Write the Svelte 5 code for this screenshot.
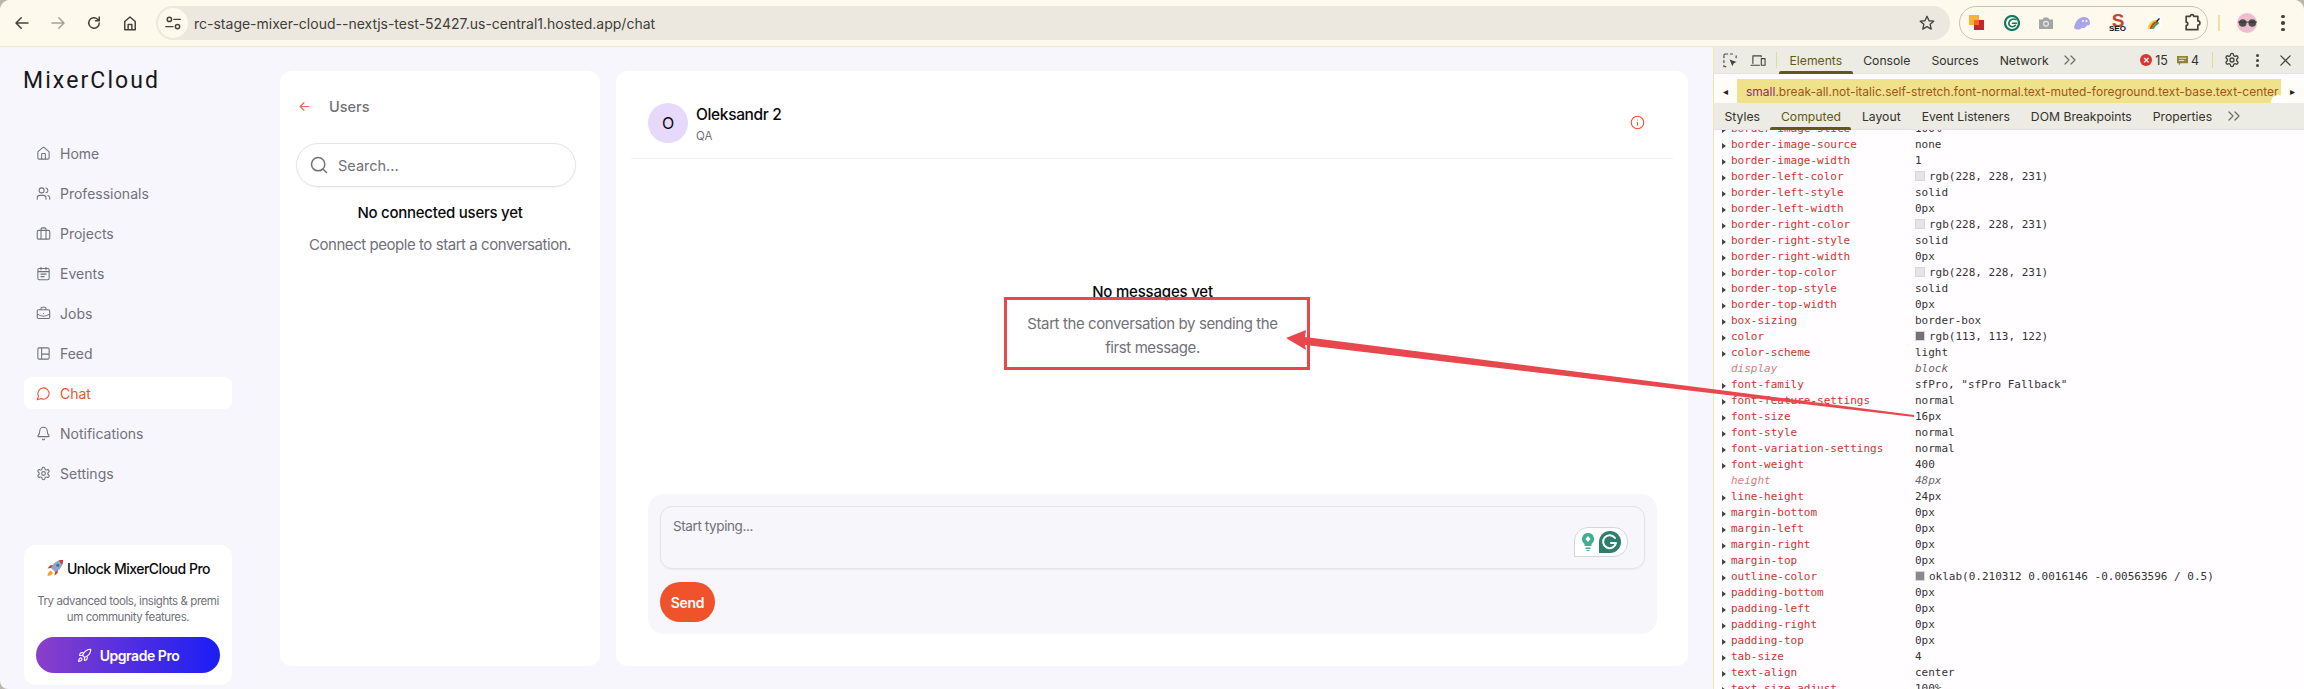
<script>
	const nav = [
		{ label: 'Home', icon: 'home' },
		{ label: 'Professionals', icon: 'users' },
		{ label: 'Projects', icon: 'luggage' },
		{ label: 'Events', icon: 'calendar' },
		{ label: 'Jobs', icon: 'briefcase' },
		{ label: 'Feed', icon: 'feed' },
		{ label: 'Chat', icon: 'chat', active: true },
		{ label: 'Notifications', icon: 'bell' },
		{ label: 'Settings', icon: 'gear' }
	];

	const icons = {
		home: 'M15 21v-8a1 1 0 0 0-1-1h-4a1 1 0 0 0-1 1v8M3 10a2 2 0 0 1 .709-1.528l7-5.999a2 2 0 0 1 2.582 0l7 5.999A2 2 0 0 1 21 10v9a2 2 0 0 1-2 2H5a2 2 0 0 1-2-2z',
		users: 'M16 21v-2a4 4 0 0 0-4-4H6a4 4 0 0 0-4 4v2M13 7a4 4 0 1 1-8 0 4 4 0 0 1 8 0M22 21v-2a4 4 0 0 0-3-3.87M16 3.13a4 4 0 0 1 0 7.75',
		luggage: 'M4 7h16a2 2 0 0 1 2 2v10a2 2 0 0 1-2 2H4a2 2 0 0 1-2-2V9a2 2 0 0 1 2-2zM8 21V5a2 2 0 0 1 2-2h4a2 2 0 0 1 2 2v16',
		calendar: 'M5 4h14a2 2 0 0 1 2 2v14a2 2 0 0 1-2 2H5a2 2 0 0 1-2-2V6a2 2 0 0 1 2-2zM8 2v4M16 2v4M3 9h18M8 13h8M8 17h5',
		briefcase: 'M12 12h.01M16 6V4a2 2 0 0 0-2-2h-4a2 2 0 0 0-2 2v2M22 13a18.15 18.15 0 0 1-20 0M4 6h16a2 2 0 0 1 2 2v10a2 2 0 0 1-2 2H4a2 2 0 0 1-2-2V8a2 2 0 0 1 2-2z',
		feed: 'M5 3h14a2 2 0 0 1 2 2v14a2 2 0 0 1-2 2H5a2 2 0 0 1-2-2V5a2 2 0 0 1 2-2zM9 3v18M9 13h12',
		chat: 'M7.9 20A9 9 0 1 0 4 16.1L2 22Z',
		bell: 'M10.268 21a2 2 0 0 0 3.464 0M3.262 15.326A1 1 0 0 0 4 17h16a1 1 0 0 0 .74-1.673C19.41 13.956 18 12.499 18 8A6 6 0 0 0 6 8c0 4.499-1.411 5.956-2.738 7.326',
		gear: 'M12.22 2h-.44a2 2 0 0 0-2 2v.18a2 2 0 0 1-1 1.73l-.43.25a2 2 0 0 1-2 0l-.15-.08a2 2 0 0 0-2.73.73l-.22.38a2 2 0 0 0 .73 2.73l.15.1a2 2 0 0 1 1 1.72v.51a2 2 0 0 1-1 1.74l-.15.09a2 2 0 0 0-.73 2.73l.22.38a2 2 0 0 0 2.73.73l.15-.08a2 2 0 0 1 2 0l.43.25a2 2 0 0 1 1 1.73V20a2 2 0 0 0 2 2h.44a2 2 0 0 0 2-2v-.18a2 2 0 0 1 1-1.73l.43-.25a2 2 0 0 1 2 0l.15.08a2 2 0 0 0 2.73-.73l.22-.39a2 2 0 0 0-.73-2.73l-.15-.08a2 2 0 0 1-1-1.74v-.5a2 2 0 0 1 1-1.74l.15-.09a2 2 0 0 0 .73-2.73l-.22-.38a2 2 0 0 0-2.73-.73l-.15.08a2 2 0 0 1-2 0l-.43-.25a2 2 0 0 1-1-1.73V4a2 2 0 0 0-2-2zM15 12a3 3 0 1 1-6 0 3 3 0 0 1 6 0'
	};

	const light = '#e4e4e7';
	const rows = [
		{ k: 'border-image-slice', v: '100%' },
		{ k: 'border-image-source', v: 'none' },
		{ k: 'border-image-width', v: '1' },
		{ k: 'border-left-color', v: 'rgb(228, 228, 231)', s: light },
		{ k: 'border-left-style', v: 'solid' },
		{ k: 'border-left-width', v: '0px' },
		{ k: 'border-right-color', v: 'rgb(228, 228, 231)', s: light },
		{ k: 'border-right-style', v: 'solid' },
		{ k: 'border-right-width', v: '0px' },
		{ k: 'border-top-color', v: 'rgb(228, 228, 231)', s: light },
		{ k: 'border-top-style', v: 'solid' },
		{ k: 'border-top-width', v: '0px' },
		{ k: 'box-sizing', v: 'border-box' },
		{ k: 'color', v: 'rgb(113, 113, 122)', s: '#71717a' },
		{ k: 'color-scheme', v: 'light' },
		{ k: 'display', v: 'block', dim: true },
		{ k: 'font-family', v: 'sfPro, "sfPro Fallback"' },
		{ k: 'font-feature-settings', v: 'normal' },
		{ k: 'font-size', v: '16px' },
		{ k: 'font-style', v: 'normal' },
		{ k: 'font-variation-settings', v: 'normal' },
		{ k: 'font-weight', v: '400' },
		{ k: 'height', v: '48px', dim: true },
		{ k: 'line-height', v: '24px' },
		{ k: 'margin-bottom', v: '0px' },
		{ k: 'margin-left', v: '0px' },
		{ k: 'margin-right', v: '0px' },
		{ k: 'margin-top', v: '0px' },
		{ k: 'outline-color', v: 'oklab(0.210312 0.0016146 -0.00563596 / 0.5)', s: '#8a8a8c' },
		{ k: 'padding-bottom', v: '0px' },
		{ k: 'padding-left', v: '0px' },
		{ k: 'padding-right', v: '0px' },
		{ k: 'padding-top', v: '0px' },
		{ k: 'tab-size', v: '4' },
		{ k: 'text-align', v: 'center' },
		{ k: 'text-size-adjust', v: '100%' }
	];
</script>

<div class="window">
	<header class="chrome">
		<div class="controls">
			<svg viewBox="0 0 24 24" class="cico"><path d="M20 12H5M11 5l-7 7 7 7" /></svg>
			<svg viewBox="0 0 24 24" class="cico faded"><path d="M4 12h15M13 5l7 7-7 7" /></svg>
			<svg viewBox="0 0 24 24" class="cico"><path d="M19 12a7 7 0 1 1-2.2-5.1L19 9M19 4v5h-5" /></svg>
			<svg viewBox="0 0 24 24" class="cico"><path d="M5 21V10l7-6 7 6v11h-4.500v-7h-5v7zM9.500 21h5" /></svg>
		</div>
		<div class="url">
			<span class="site">
				<svg viewBox="0 0 20 20" width="18" height="18"><circle cx="6" cy="6" r="2.400" /><path d="M11 6h7M2 14h8" /><circle cx="15" cy="14" r="2.400" /></svg>
			</span>
			<span class="addr">rc-stage-mixer-cloud--nextjs-test-52427.us-central1.hosted.app/chat</span>
			<svg viewBox="0 0 24 24" class="star"><path d="M12 3l2.700 6 6.300.6-4.800 4.200 1.400 6.400L12 16.900 6.400 20.200l1.400-6.400L3 9.600l6.300-.6z" /></svg>
		</div>
		<div class="exts">
			<svg viewBox="0 0 16 16" width="16" height="16"><rect x="0" y="0" width="10" height="10" fill="#f9b233" /><rect x="5" y="5" width="10" height="10" fill="#c8222d" /><rect x="5" y="5" width="5" height="5" fill="#f0662a" /></svg>
			<svg viewBox="0 0 16 16" width="16" height="16"><circle cx="8" cy="8" r="7" fill="none" stroke="#14795f" stroke-width="2.200" /><path d="M8.500 8.300h4M12 4.600A5 5 0 0 0 4.800 8a3.700 3.700 0 0 0 6.600 2.300" fill="none" stroke="#14795f" stroke-width="1.600" /></svg>
			<svg viewBox="0 0 16 16" width="16" height="16"><path d="M1 4.500h3.500L6 2.500h4l1.500 2H15v9.500H1z" fill="#a4a4a4" /><circle cx="8" cy="8.800" r="3" fill="#ece9e2" /><circle cx="8" cy="8.800" r="1.800" fill="#a4a4a4" /></svg>
			<svg viewBox="0 0 18 16" width="18" height="16"><path d="M1 13c1-6 4-11 10-11 4 0 6 3 6 6s-2 2-3 2.500-1.500 3-4 2.500-2 1.500-4 1.500-3 .5-5-1.500z" fill="#a9a4ee" /><circle cx="10" cy="6" r="1" fill="#fff" /><circle cx="13.500" cy="6" r="1" fill="#fff" /></svg>
			<span class="seo"><b>S</b><i>SEO</i></span>
			<svg viewBox="0 0 16 16" width="16" height="16"><circle cx="8" cy="8" r="8" fill="#fff" /><path d="M3 13c1-4 3-6 6-7" stroke="#f4d21f" stroke-width="2.500" fill="none" /><path d="M5 13c1-3 3-5 6-6" stroke="#e5322d" stroke-width="2.200" fill="none" /><path d="M7 13c1-2 3-4 5-5" stroke="#1fb25a" stroke-width="2" fill="none" /><path d="M10 6l3-3 1 1-3 3z" fill="#222" /></svg>
			<svg viewBox="0 0 24 24" class="cico puzzle"><path d="M5 4h5a2 2 0 0 1 4 0h5v5.500a2.500 2.500 0 0 1 0 5V20H5v-5a2 2 0 0 0 0-4z" /></svg>
		</div>
		<span class="sep"></span>
		<span class="profile">
			<svg viewBox="0 0 20 10" width="19" height="10"><circle cx="5" cy="5" r="4" fill="#4d4d4d" /><circle cx="15" cy="5" r="4" fill="#4d4d4d" /><path d="M0 4h20" stroke="#333" stroke-width="1" /></svg>
		</span>
		<span class="kebab"><i></i><i></i><i></i></span>
	</header>

	<div class="body">
		<div class="app">
			<aside class="sidebar">
				<div class="logo">MixerCloud</div>
				<nav>
					{#each nav as item}
						<div class="nav-item" class:active={item.active}>
							<svg viewBox="0 0 24 24" class="ico"><path d={icons[item.icon]} /></svg>
							<span>{item.label}</span>
						</div>
					{/each}
				</nav>
				<div class="pro">
					<div class="pro-title">
						<svg viewBox="0 0 18 18" width="18" height="18">
							<path d="M5 9C7 4 11 1 17 1c0 6-3 10-8 12z" fill="#8fa7c9" />
							<path d="M12.500 1.500C14.500 1 16 1 17 1c0 1.500-.2 3-.7 4.500z" fill="#d8352c" />
							<circle cx="11.800" cy="6.200" r="1.500" fill="#3b6ea5" />
							<path d="M5 9L1.500 9.500 4 6.500l3-.5zM9 13l-.5 3.500 3-2.500.5-3z" fill="#d8352c" />
							<path d="M4.500 11.500c-2 1-3 3-3 5.500 2.500 0 4.500-1 5.500-3z" fill="#f6a623" />
						</svg>
						<span>Unlock MixerCloud Pro</span>
					</div>
					<p>Try advanced tools, insights &amp; premi<br />um community features.</p>
					<button class="upgrade">
						<svg viewBox="0 0 24 24" class="rocket">
							<path d="M4.500 16.500c-1.500 1.260-2 5-2 5s3.740-.5 5-2c.71-.84.7-2.130-.09-2.910a2.180 2.180 0 0 0-2.910-.09zM12 15l-3-3a22 22 0 0 1 2-3.950A12.880 12.880 0 0 1 22 2c0 2.720-.78 7.500-6 11a22.350 22.350 0 0 1-4 2zM9 12H4s.55-3.030 2-4c1.620-1.080 5 0 5 0M12 15v5s3.030-.55 4-2c1.080-1.620 0-5 0-5" />
						</svg>
						<span>Upgrade Pro</span>
					</button>
				</div>
			</aside>

			<section class="users">
				<div class="users-head">
					<svg viewBox="0 0 24 24" class="back"><path d="M20 12H5M11 5l-7 7 7 7" /></svg>
					<span>Users</span>
				</div>
				<div class="search">
					<svg viewBox="0 0 24 24" class="search-ico"><path d="M19 11a8 8 0 1 1-16 0 8 8 0 0 1 16 0M21 21l-4.300-4.300" /></svg>
					<span>Search...</span>
				</div>
				<div class="none-title">No connected users yet</div>
				<div class="none-text">Connect people to start a conversation.</div>
			</section>

			<section class="chat">
				<div class="chat-head">
					<div class="avatar">O</div>
					<div class="who">
						<div class="name">Oleksandr 2</div>
						<div class="role">QA</div>
					</div>
					<svg viewBox="0 0 24 24" class="info"><path d="M22 12a10 10 0 1 1-20 0 10 10 0 0 1 20 0M12 16v-4M12 8h.01" /></svg>
				</div>
				<div class="empty">
					<div class="empty-title">No messages yet</div>
					<div class="empty-text">Start the conversation by sending the<br />first message.</div>
				</div>
				<div class="composer">
					<div class="input">
						<span>Start typing...</span>
						<div class="gram">
							<svg viewBox="0 0 14 20" width="14" height="20"><path d="M7 1a6 6 0 0 1 3.500 10.900V14h-7v-2.100A6 6 0 0 1 7 1z" fill="#3fae93" /><path d="M4.500 15.500h5v1.500h-5zM5.500 18h3v1h-3z" fill="#3fae93" /><path d="M7 4l2.500 3L7 10 4.500 7z" fill="#fff" /></svg>
							<svg viewBox="0 0 22 22" width="22" height="22"><circle cx="11" cy="11" r="11" fill="#2f7d6d" /><rect x="0" y="11" width="11" height="11" fill="#2f7d6d" /><path d="M16 7a6.500 6.500 0 1 0 1 5h-5" fill="none" stroke="#fff" stroke-width="2" /></svg>
						</div>
					</div>
					<button class="send">Send</button>
				</div>
			</section>
		</div>

		<div class="devtools">
			<div class="dt-bar">
				<svg viewBox="0 0 16 16" class="dt-ico first"><path d="M1 5V2.500A1.500 1.500 0 0 1 2.500 1H5M8 1h2.500M14 5V2.500M1 8v2M1 13v1.500h2" stroke-dasharray="2 1" /><path d="M7 7l7.500 2.500-3 1.500-1.500 3z" fill="#45443c" stroke="none" /></svg>
				<svg viewBox="0 0 18 16" class="dt-ico dev"><path d="M3 11V3h9v1M1 13h9M12 6h4v7h-4z" /></svg>
				<span class="dt-div"></span>
				<span class="tab on">Elements</span>
				<span class="tab">Console</span>
				<span class="tab">Sources</span>
				<span class="tab">Network</span>
				<svg viewBox="0 0 12 10" class="more"><path d="M1 1l4 4-4 4M7 1l4 4-4 4" /></svg>
				<span class="grow"></span>
				<span class="err">&#x2715;</span>
				<span class="count">15</span>
				<svg viewBox="0 0 12 12" class="msg"><path d="M0 1h12v8H4l-2 2.500V9H0z" fill="#8d8433" /><path d="M2.500 3.500h7M2.500 6h5" stroke="#ecebe4" /></svg>
				<span class="count">4</span>
				<span class="dt-div two"></span>
				<svg viewBox="0 0 24 24" class="dt-gear"><path d={icons.gear} /></svg>
				<span class="kebab small"><i></i><i></i><i></i></span>
				<svg viewBox="0 0 14 14" class="dt-x"><path d="M2 2l10 10M12 2L2 12" /></svg>
			</div>
			<div class="crumb-gap"></div>
			<div class="crumbs">
				<span class="crumb-btn">&#9666;</span>
				<span class="crumb-text"><em>small</em>.break-all.not-italic.self-stretch.font-normal.text-muted-foreground.text-base.text-center</span>
				<span class="crumb-btn right">&#9656;</span>
				<span class="bump"></span>
			</div>
			<div class="dt-bar sub">
				<span class="tab">Styles</span>
				<span class="tab on">Computed</span>
				<span class="tab">Layout</span>
				<span class="tab">Event Listeners</span>
				<span class="tab">DOM Breakpoints</span>
				<span class="tab">Properties</span>
				<svg viewBox="0 0 12 10" class="more"><path d="M1 1l4 4-4 4M7 1l4 4-4 4" /></svg>
			</div>
			<div class="props">
				{#each rows as row}
					<div class="row" class:dim={row.dim}>
						<span class="tri"></span>
						<span class="key">{row.k}</span>
						<span class="val">
							{#if row.s}<i class="swatch" style="background: {row.s}"></i>{/if}{row.v}
						</span>
					</div>
				{/each}
			</div>
		</div>
	</div>

	<div class="box"></div>
	<svg class="arrow" viewBox="0 0 640 94" width="640" height="94">
		<path d="M2 12L22 4l-1 7L630 89v2L21 19l1 5z" fill="#e8484d" />
	</svg>
</div>

<style>
	:global(body) {
		margin: 0;
		background: #b9b7ae;
	}
	.window {
		position: relative;
		width: 2304px;
		height: 689px;
		overflow: hidden;
		border-radius: 10px 10px 0 8px;
		font-family: Inter, 'Noto Sans', sans-serif;
		display: flex;
		flex-direction: column;
		background: #f6f6fc;
	}
	svg {
		flex: none;
		display: block;
		stroke-linecap: round;
		stroke-linejoin: round;
	}

	/* browser bar */
	.chrome {
		height: 46px;
		flex: none;
		display: flex;
		align-items: center;
		background: #fdf9ec;
		border-bottom: 1px solid #efe9d2;
		padding-left: 13px;
	}
	.controls {
		display: flex;
		gap: 18px;
		width: 143px;
	}
	.cico {
		width: 18px;
		height: 18px;
		fill: none;
		stroke: #45443c;
		stroke-width: 2;
	}
	.cico.faded {
		stroke: #a5a396;
	}
	.url {
		width: 1794px;
		height: 34px;
		border-radius: 17px;
		background: #ece8e0;
		display: flex;
		align-items: center;
		padding: 0 14px 0 2px;
		box-sizing: border-box;
	}
	.site {
		width: 30px;
		height: 30px;
		border-radius: 50%;
		background: #fdf9ec;
		display: flex;
		align-items: center;
		justify-content: center;
	}
	.site svg {
		fill: none;
		stroke: #45443c;
		stroke-width: 1.600;
	}
	.addr {
		margin-left: 6px;
		font-size: 14px;
		color: #3f3e37;
		font-variant-ligatures: none;
		font-feature-settings: 'calt' 0;
	}
	.star {
		width: 18px;
		height: 18px;
		margin-left: auto;
		fill: none;
		stroke: #45443c;
		stroke-width: 1.800;
	}
	.exts {
		margin-left: 9px;
		width: 249px;
		height: 34px;
		box-sizing: border-box;
		border: 1px solid #c8c4b4;
		border-radius: 17px;
		display: flex;
		align-items: center;
		justify-content: space-between;
		padding: 0 5px 0 9px;
	}
	.exts > * {
		flex: none;
	}
	.puzzle {
		margin-left: 2px;
		width: 20px;
		height: 20px;
		stroke: #45443c;
	}
	.seo {
		position: relative;
		width: 18px;
		height: 20px;
		text-align: center;
		font-family: 'Liberation Sans', sans-serif;
		line-height: 1;
	}
	.seo b {
		color: #c9432f;
		font-size: 19px;
		line-height: 16px;
		display: block;
	}
	.seo i {
		position: absolute;
		left: 0;
		bottom: 0;
		font-style: normal;
		font-weight: 700;
		font-size: 8px;
		color: #111;
	}
	.sep {
		width: 2px;
		height: 16px;
		background: #efe0a0;
		margin-left: 10px;
	}
	.profile {
		width: 20px;
		height: 20px;
		border-radius: 50%;
		background: #efbdd0;
		margin-left: 17px;
		display: flex;
		align-items: center;
		justify-content: center;
	}
	.kebab {
		display: flex;
		flex-direction: column;
		gap: 3px;
		margin-left: 24px;
	}
	.kebab i {
		width: 3.500px;
		height: 3.500px;
		border-radius: 50%;
		background: #45443c;
	}

	.body {
		flex: 1;
		min-height: 0;
		display: flex;
	}
	.app {
		width: 1713px;
		flex: none;
		display: flex;
		box-sizing: border-box;
		padding-right: 25px;
	}

	/* sidebar */
	.sidebar {
		width: 280px;
		flex: none;
		box-sizing: border-box;
		padding: 0 48px 4px 24px;
		display: flex;
		flex-direction: column;
	}
	.logo {
		margin: 23px 0 0 -1px;
		font-family: Roboto, sans-serif;
		font-size: 23px;
		line-height: 22px;
		letter-spacing: 2.100px;
		color: #18181b;
		white-space: nowrap;
	}
	nav {
		margin-top: 45px;
		display: flex;
		flex-direction: column;
		gap: 8px;
	}
	.nav-item {
		height: 32px;
		border-radius: 8px;
		display: flex;
		align-items: center;
		padding-left: 12px;
		gap: 9px;
		font-size: 14px;
		color: #71717a;
	}
	.nav-item.active {
		background: #fff;
		color: #f0532b;
	}
	.ico {
		width: 15px;
		height: 15px;
		fill: none;
		stroke: currentColor;
		stroke-width: 1.700;
	}
	.pro {
		margin-top: auto;
		height: 140px;
		box-sizing: border-box;
		background: #fff;
		border-radius: 12px;
		padding: 13px 12px 12px;
		text-align: center;
	}
	.pro-title {
		display: flex;
		justify-content: center;
		align-items: center;
		gap: 3px;
		height: 20px;
		font-size: 14px;
		font-weight: 500;
		letter-spacing: -0.5px;
		color: #09090b;
	}
	.pro p {
		margin: 15px -6px 12px;
		font-size: 11.500px;
		line-height: 16px;
		letter-spacing: -0.43px;
		white-space: nowrap;
		color: #71717a;
	}
	.upgrade {
		width: 100%;
		height: 36px;
		border: 0;
		border-radius: 18px;
		background: linear-gradient(90deg, #8b3fc9, #1a1ef5);
		color: #fff;
		font: 600 14px Inter, sans-serif;
		letter-spacing: -0.45px;
		display: flex;
		align-items: center;
		justify-content: center;
		gap: 8px;
	}
	.rocket {
		width: 15px;
		height: 15px;
		fill: none;
		stroke: #fff;
		stroke-width: 1.800;
	}

	/* users */
	.users {
		width: 320px;
		flex: none;
		margin: 24px 16px 23px 0;
		background: #fff;
		border-radius: 12px;
		box-sizing: border-box;
		padding: 23px 24px 0 16px;
		text-align: center;
	}
	.users-head {
		display: flex;
		align-items: center;
		height: 24px;
		gap: 18px;
		padding-left: 2px;
		color: #71717a;
		font-size: 14.500px;
		font-weight: 500;
	}
	.back {
		width: 13px;
		height: 13px;
		fill: none;
		stroke: #f0664a;
		stroke-width: 2.200;
	}
	.search {
		margin-top: 25px;
		height: 44px;
		box-sizing: border-box;
		border: 1px solid #e4e4e7;
		border-radius: 22px;
		box-shadow: 0 1px 2px rgba(0, 0, 0, 0.05);
		display: flex;
		align-items: center;
		gap: 9px;
		padding-left: 12px;
		font-size: 14.500px;
		color: #71717a;
	}
	.search-ico {
		width: 20px;
		height: 20px;
		fill: none;
		stroke: #71717a;
		stroke-width: 1.800;
	}
	.none-title {
		margin-top: 14px;
		padding-left: 8px;
		line-height: 24px;
		font-size: 15px;
		font-weight: 500;
		letter-spacing: -0.25px;
		color: #09090b;
		white-space: nowrap;
	}
	.none-text {
		margin-top: 8px;
		padding-left: 8px;
		line-height: 24px;
		font-size: 15px;
		letter-spacing: -0.45px;
		white-space: nowrap;
		color: #71717a;
	}

	/* chat */
	.chat {
		flex: 1;
		margin: 24px 0 23px;
		background: #fff;
		border-radius: 12px;
		box-sizing: border-box;
		padding: 0 15px;
		display: flex;
		flex-direction: column;
	}
	.chat-head {
		height: 88px;
		flex: none;
		box-sizing: border-box;
		border-bottom: 1px solid #f3f3f5;
		padding: 32px 28px 0 17px;
		display: flex;
		gap: 8px;
	}
	.avatar {
		width: 40px;
		height: 40px;
		flex: none;
		border-radius: 50%;
		background: #e6d9fb;
		color: #09090b;
		display: flex;
		align-items: center;
		justify-content: center;
		font-size: 16px;
	}
	.who {
		flex: 1;
		padding-top: 1px;
	}
	.name {
		font-size: 15.500px;
		font-weight: 500;
		line-height: 22px;
		color: #09090b;
		letter-spacing: -0.35px;
	}
	.role {
		margin-top: 2px;
		font-size: 11.500px;
		line-height: 16px;
		color: #71717a;
	}
	.info {
		width: 15px;
		height: 15px;
		margin-top: 12px;
		fill: none;
		stroke: #f0532b;
		stroke-width: 1.800;
	}
	.empty {
		flex: 1;
		text-align: center;
		padding: 121px 0 0 1px;
		line-height: 24px;
		font-size: 15px;
	}
	.empty-title {
		font-weight: 500;
		color: #09090b;
		letter-spacing: -0.2px;
	}
	.empty-text {
		margin-top: 8px;
		color: #71717a;
		letter-spacing: -0.4px;
	}
	.composer {
		height: 140px;
		flex: none;
		margin: 0 16px 32px 17px;
		background: #f6f6fb;
		border-radius: 16px;
		padding: 12px;
		box-sizing: border-box;
	}
	.input {
		position: relative;
		height: 63px;
		box-sizing: border-box;
		border: 1px solid #e4e4e7;
		border-radius: 12px;
		box-shadow: 0 1px 2px rgba(0, 0, 0, 0.05);
		padding: 9px 12px;
		font-size: 13.500px;
		letter-spacing: -0.4px;
		line-height: 20px;
		color: #71717a;
	}
	.gram {
		position: absolute;
		right: 16px;
		top: 20px;
		height: 30px;
		width: 54px;
		box-sizing: border-box;
		background: #fff;
		border: 1px solid #d5d5dc;
		border-radius: 14px 14px 14px 0;
		display: flex;
		align-items: center;
		justify-content: center;
		gap: 4px;
	}
	.send {
		margin-top: 13px;
		display: block;
		width: 55px;
		height: 40px;
		border: 0;
		border-radius: 20px;
		background: #f0532b;
		color: #fff;
		font: 600 14px Inter, sans-serif;
		padding: 0;
		letter-spacing: -0.3px;
	}

	/* devtools */
	.devtools {
		width: 591px;
		flex: none;
		box-sizing: border-box;
		border-left: 1px solid #f0e8a6;
		background: #fffdff;
		display: flex;
		flex-direction: column;
		min-height: 0;
	}
	.dt-bar {
		height: 26px;
		flex: none;
		display: flex;
		align-items: stretch;
		background: #ecebe4;
		border-bottom: 1px solid #efe8a8;
		font-size: 12.200px;
		color: #33322b;
	}
	.dt-ico {
		align-self: center;
		width: 15px;
		height: 15px;
		fill: none;
		stroke: #45443c;
		stroke-width: 1.200;
	}
	.dt-ico.first {
		margin-left: 9px;
	}
	.dt-ico.dev {
		width: 17px;
		margin-left: 12px;
	}
	.dt-div {
		width: 1px;
		height: 16px;
		align-self: center;
		background: #e3d9a0;
		margin: 0 2px 0 9px;
	}
	.dt-div.two {
		margin: 0 0 0 13px;
	}
	.tab {
		position: relative;
		display: flex;
		align-items: center;
		padding: 0 10.500px;
		white-space: nowrap;
	}
	.tab.on {
		color: #625a14;
	}
	.tab.on::after {
		content: '';
		position: absolute;
		left: 0;
		right: 0;
		bottom: -1px;
		height: 3px;
		border-radius: 2px 2px 0 0;
		background: #625a14;
	}
	.more {
		align-self: center;
		width: 12px;
		height: 10px;
		margin-left: 5px;
		fill: none;
		stroke: #6c6b62;
		stroke-width: 1.200;
	}
	.grow {
		flex: 1;
	}
	.err {
		align-self: center;
		width: 12px;
		height: 12px;
		border-radius: 50%;
		background: #d9352c;
		color: #fff;
		font-size: 8px;
		font-weight: 700;
		line-height: 12px;
		text-align: center;
	}
	.count {
		align-self: center;
		margin-left: 3px;
		font-size: 12.500px;
	}
	.msg {
		align-self: center;
		width: 11px;
		height: 11px;
		margin-left: 9px;
	}
	.dt-gear {
		align-self: center;
		width: 16px;
		height: 16px;
		margin-left: 11px;
		fill: none;
		stroke: #45443c;
		stroke-width: 2;
	}
	.kebab.small {
		align-self: center;
		margin-left: 16px;
		gap: 2px;
	}
	.kebab.small i {
		width: 3px;
		height: 3px;
	}
	.dt-x {
		align-self: center;
		width: 13px;
		height: 13px;
		margin: 0 12px 0 20px;
		fill: none;
		stroke: #45443c;
		stroke-width: 1.400;
	}
	.crumb-gap {
		height: 5px;
		flex: none;
	}
	.crumbs {
		position: relative;
		height: 24px;
		flex: none;
		display: flex;
		align-items: center;
		background: #f0e28a;
		font-size: 12px;
	}
	.crumb-btn {
		width: 23px;
		height: 24px;
		flex: none;
		background: #fffdf8;
		color: #222;
		font-size: 10px;
		line-height: 24px;
		text-align: center;
	}
	.crumb-text {
		flex: 1;
		margin-left: 9px;
		white-space: nowrap;
		overflow: hidden;
		color: #a5521a;
	}
	.crumb-text em {
		font-style: normal;
		color: #8f2a6b;
	}
	.bump {
		position: absolute;
		right: 19px;
		top: 16px;
		width: 14px;
		height: 8px;
		border-radius: 7px 7px 0 0;
		background: #fff;
	}
	.dt-bar.sub {
		position: relative;
		z-index: 1;
		height: 26px;
		border-bottom: 1px solid #efe8a8;
	}
	.props {
		flex: 1;
		min-height: 0;
		overflow: hidden;
		margin-top: -9px;
		font-family: 'DejaVu Sans Mono', monospace;
		font-size: 11px;
		line-height: 16px;
		color: #333;
	}
	.row {
		height: 16px;
		display: flex;
		align-items: center;
		padding-left: 8px;
		white-space: nowrap;
	}
	.tri {
		width: 0;
		height: 0;
		border-left: 4px solid #444;
		border-top: 3.500px solid transparent;
		border-bottom: 3.500px solid transparent;
		margin-top: 2px;
	}
	.key {
		margin-left: 5px;
		width: 184px;
		color: #c8372d;
		flex: none;
	}
	.swatch {
		display: inline-block;
		width: 10px;
		height: 10px;
		border: 1px solid #d8d8d8;
		box-sizing: border-box;
		margin-right: 4px;
		vertical-align: -1px;
	}
	.row.dim .tri {
		visibility: hidden;
	}
	.row.dim .key {
		opacity: 0.65;
		font-style: italic;
	}
	.row.dim .val {
		opacity: 0.75;
		font-style: italic;
	}

	/* annotation */
	.box {
		position: absolute;
		left: 1004px;
		top: 297px;
		width: 306px;
		height: 73px;
		box-sizing: border-box;
		border: 3px solid #e8484d;
	}
	.arrow {
		position: absolute;
		left: 1284px;
		top: 326px;
		pointer-events: none;
	}
</style>
